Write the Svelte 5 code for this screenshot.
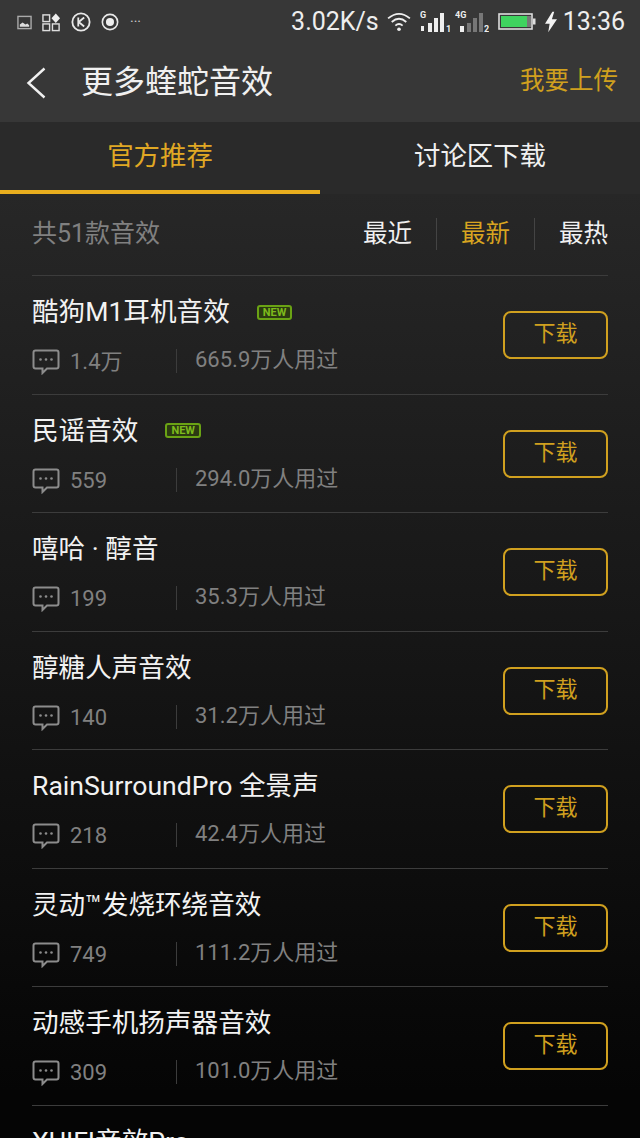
<script>
  const items = [
    { name: '酷狗M1耳机音效', isNew: true, c: '1.4万', u: '665.9万人用过' },
    { name: '民谣音效', isNew: true, c: '559', u: '294.0万人用过' },
    { name: '嘻哈 · 醇音', c: '199', u: '35.3万人用过' },
    { name: '醇糖人声音效', c: '140', u: '31.2万人用过' },
    { name: 'RainSurroundPro 全景声', c: '218', u: '42.4万人用过' },
    { name: '灵动™发烧环绕音效', c: '749', u: '111.2万人用过' },
    { name: '动感手机扬声器音效', c: '309', u: '101.0万人用过' },
    { name: 'XUIFI音效Pro', c: '', u: '' }
  ];
</script>

<div class="page">
  <header class="head">
    <div class="status">
      <div class="left">
        <svg width="15" height="15" viewBox="0 0 16 16"><rect x="1" y="1.5" width="14" height="13" fill="none" stroke="#aaa" stroke-width="1.5"/><path d="M3 12 L3 10 L6 8 L9 10 L11 9 L13 11 V12.5 H3Z" fill="#ddd"/></svg>
        <svg width="19" height="19" viewBox="0 0 20 20" fill="none" stroke="#ddd" stroke-width="1.5"><rect x="1" y="2" width="7" height="7"/><rect x="1" y="11.5" width="7" height="7"/><rect x="11" y="11.5" width="7" height="7"/><path d="M14.5 0.5 L19 5.5 L14.5 10.5 L10 5.5Z" fill="#eee" stroke="none"/></svg>
        <svg width="20" height="20" viewBox="0 0 22 22" fill="none" stroke="#e8e8e8"><circle cx="11" cy="11" r="9.5" stroke-width="2"/><path d="M8 6 V16 M14.5 6 L8.5 11 L14.5 16" stroke-width="2"/></svg>
        <svg width="18" height="18" viewBox="0 0 20 20"><circle cx="10" cy="10" r="8.5" fill="none" stroke="#e8e8e8" stroke-width="1.8"/><circle cx="10" cy="10" r="4.5" fill="#eee"/></svg>
        <span class="dots">···</span>
      </div>
      <div class="right">
        <span class="speed">3.02K/s</span>
        <svg class="wifi" width="26" height="20" viewBox="0 0 28 22" fill="none" stroke="#eee" stroke-width="2"><path d="M2 7 Q14 -3 26 7 M6 11 Q14 4 22 11 M10 15 Q14 11.500 18 15"/><circle cx="14" cy="19" r="2" fill="#eee" stroke="none"/></svg>
        <span class="sig">
          <svg width="30" height="22" viewBox="0 0 30 22"><text x="0" y="7" class="mini">G</text><rect x="1" y="15" width="3" height="5" fill="#eee"/><g fill="#eee"><rect x="8" y="12" width="4" height="9"/><rect x="14" y="7" width="4" height="14"/><rect x="20" y="2" width="4" height="19"/></g><text x="26" y="21" class="mini">1</text></svg>
        </span>
        <span class="sig">
          <svg width="34" height="22" viewBox="0 0 34 22"><text x="0" y="7" class="mini">4G</text><rect x="5" y="15" width="4" height="6" fill="#eee"/><g fill="#777"><rect x="12" y="12" width="4" height="9"/><rect x="18" y="7" width="4" height="14"/><rect x="24" y="2" width="4" height="19"/></g><text x="29" y="21" class="mini">2</text></svg>
        </span>
        <svg class="batt" width="38" height="18" viewBox="0 0 38 18"><rect x="1" y="1" width="33" height="15" fill="none" stroke="#ddd" stroke-width="1.6"/><rect x="3" y="3" width="26" height="11" fill="#3fd35f"/><rect x="29" y="3" width="4" height="11" fill="#777"/><rect x="35" y="5.500" width="2.500" height="6" fill="#ddd"/></svg>
        <svg class="bolt" width="12" height="22" viewBox="0 0 13 22"><path d="M8 0 L0 13 H5 L3.500 22 L13 8 H7.500 L10 0Z" fill="#f2f2f2"/></svg>
        <span class="time">13:36</span>
      </div>
    </div>
    <div class="nav">
      <svg class="back" width="20" height="32" viewBox="0 0 20 32" fill="none" stroke="#f0f0f0" stroke-width="2.400"><path d="M18.500 1.500 L2.500 16 L18.500 30.500"/></svg>
      <h1>更多蝰蛇音效</h1>
      <span class="upload">我要上传</span>
    </div>
  </header>

  <div class="tabs">
    <div class="tab active">官方推荐</div>
    <div class="tab">讨论区下载</div>
  </div>

  <main class="content">
    <div class="filter">
      <span class="count">共51款音效</span>
      <div class="sorts">
        <span>最近</span><i></i><span class="on">最新</span><i></i><span>最热</span>
      </div>
    </div>
    {#each items as it}
      <div class="row">
        <div class="info">
          <div class="title"><span>{it.name}</span>{#if it.isNew}<b class="new">NEW</b>{/if}</div>
          {#if it.c}
            <div class="meta">
              <svg width="28" height="26" viewBox="0 0 28 26" fill="none" stroke="#8c8c8c" stroke-width="2"><path d="M3.500 1.500 H24.500 Q26.500 1.500 26.500 3.500 V17.500 Q26.500 19.500 24.500 19.500 H15 L10.500 24 V19.500 H3.500 Q1.500 19.500 1.500 17.500 V3.500 Q1.500 1.500 3.500 1.500Z"/><g fill="#8c8c8c" stroke="none"><circle cx="8.500" cy="10.500" r="1.300"/><circle cx="14" cy="10.500" r="1.300"/><circle cx="19.500" cy="10.500" r="1.300"/></g></svg>
              <span class="cnt">{it.c}</span>
              <i></i>
              <span class="users">{it.u}</span>
            </div>
          {/if}
        </div>
        {#if it.c}<button class="dl">下载</button>{/if}
      </div>
    {/each}
  </main>
</div>

<style>
  :global(body) { margin: 0; background: #050505; }
  .page {
    width: 640px; height: 1138px; overflow: hidden;
    font-family: Roboto, "Noto Sans CJK SC", sans-serif;
    color: #f0f0f0;
  }
  .head { height: 122px; background: #373737; }
  .status { height: 44px; display: flex; justify-content: space-between; align-items: center; padding: 0 15px 0 17px; }
  .left { display: flex; align-items: center; gap: 10px; }
  .left svg { flex: none; }
  .dots { font-size: 14px; color: #ccc; margin-left: 1px; }
  .right { display: flex; align-items: center; gap: 5px; }
  .speed, .time { font-size: 25px; line-height: 30px; color: #eee; }
  .time { margin-left: 1px; }
  .wifi { margin: 0 3px 0 2px; }
  .sig { display: flex; }
  .batt { margin: 0 4px; }
  .mini { font: 700 9px Roboto, sans-serif; fill: #eee; }
  .nav { height: 78px; display: flex; align-items: center; padding: 0 22px 0 26px; }
  .back { flex: none; margin-right: 35px; margin-top: -1px; }
  h1 { margin: 0 0 2px; flex: 1; font-size: 32px; line-height: 40px; font-weight: 400; color: #f0f0f0; }
  .upload { font-size: 24.500px; line-height: 34px; color: #d0a01e; margin-bottom: 4px; }
  .tabs { height: 72px; background: #2a2a2a; display: flex; }
  .tab { flex: 1; box-sizing: border-box; height: 72px; display: flex; align-items: center; justify-content: center; font-size: 26.400px; line-height: 34px; color: #f0f0f0; padding-bottom: 4px; }
  .active { color: #e0a824; border-bottom: 4px solid #e9ae1e; padding-bottom: 0; }
  .content { height: 944px; padding: 0 32px; background: linear-gradient(#272727, #050505 95%); }
  .filter { height: 81px; box-sizing: border-box; display: flex; align-items: center; justify-content: space-between; padding-bottom: 1px; }
  .count { font-size: 25px; line-height: 32px; color: #808080; }
  .sorts { display: flex; align-items: center; font-size: 24.500px; line-height: 32px; color: #f0f0f0; }
  .sorts i { width: 1px; height: 32px; background: #444; margin: 0 24px; }
  .sorts .on { color: #d8a420; }
  .row { height: 118.500px; box-sizing: border-box; border-top: 1px solid #3c3c3c; display: flex; align-items: flex-start; justify-content: space-between; }
  .title { height: 36px; margin-top: 18px; display: flex; align-items: center; font-size: 26.600px; line-height: 36px; color: #f2f2f2; white-space: nowrap; }
  .new { margin-left: 27px; font: 700 11px/11px Roboto, sans-serif; color: #7dbb1c; border: 2px solid #6aa314; border-radius: 3px; padding: 0 4px; background: #2c3a12; }
  .meta { margin-top: 17px; height: 28px; display: flex; align-items: center; font-size: 22px; line-height: 28px; color: #808080; }
  .meta svg { flex: none; margin-right: 10px; margin-top: 2px; }
  .cnt { width: 106px; flex: none; margin-top: 2px; }
  .meta i { width: 1px; height: 24px; background: #3c3c3c; margin-right: 18px; }
  .users { margin-bottom: 2px; }
  .dl { margin-top: 35px; width: 105px; height: 48px; box-sizing: border-box; background: transparent; border: 2px solid #d0a01f; border-radius: 8px; color: #d0a01f; font: 22px/28px Roboto, "Noto Sans CJK SC", sans-serif; padding: 0 0 2px; }
</style>
